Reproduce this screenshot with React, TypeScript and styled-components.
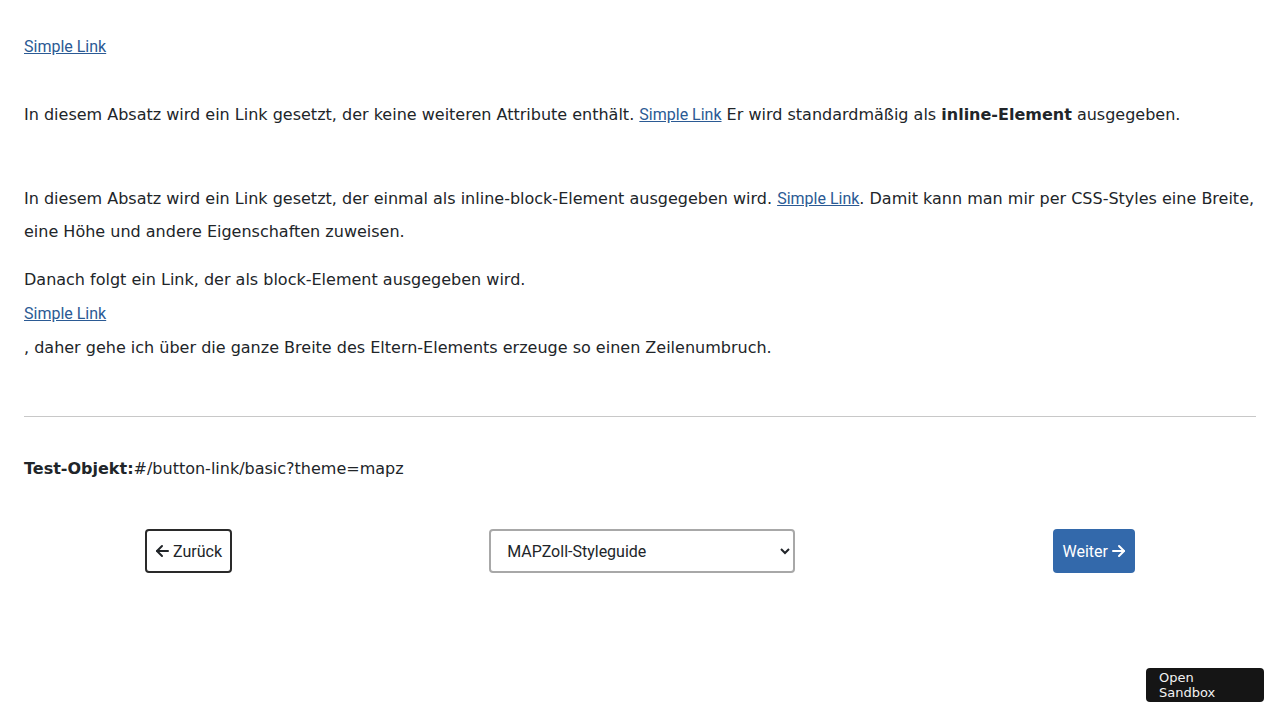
import styled, { createGlobalStyle } from "styled-components";

const GlobalStyle = createGlobalStyle`
  html, body {
    margin: 0;
    padding: 0;
    background: #ffffff;
  }
  body {
    font-family: "DejaVu Sans", Verdana, sans-serif;
    font-size: 16px;
    color: #212529;
  }
`;

const Page = styled.main`
  padding: 24px 24px 0;
`;

const Link = styled.a<{ block?: boolean }>`
  font-family: Roboto, "Liberation Sans", sans-serif;
  font-size: 16px;
  color: #2b5a94;
  text-decoration: underline;
  display: ${({ block }) => (block ? "block" : "inline")};
  line-height: ${({ block }) => (block ? "35px" : "inherit")};
`;

const LinkBlock = styled.div`
  height: 44px;
  display: flex;
  align-items: center;
`;

const Paragraph = styled.p`
  margin: 0;
  line-height: 33px;
`;

const Section = styled.section`
  display: flex;
  flex-direction: column;
`;

const Gap = styled.div<{ size: number }>`
  height: ${({ size }) => size}px;
`;

const Rule = styled.hr`
  border: 0;
  border-top: 1px solid #c8c8c8;
  margin: 0;
`;

const TestLine = styled.p`
  margin: 0;
  line-height: 22px;
`;

const Nav = styled.nav`
  display: flex;
  justify-content: space-between;
  align-items: center;
  padding: 0 121px;
`;

const NavButton = styled.button<{ primary?: boolean }>`
  height: 44px;
  padding: ${({ primary }) => (primary ? "0 9px 0 10px" : "0 8px")};
  border: ${({ primary }) => (primary ? "0" : "2px solid #2a2a2a")};
  border-radius: 4px;
  background: ${({ primary }) => (primary ? "#3369ab" : "#fff")};
  color: ${({ primary }) => (primary ? "#fff" : "#212529")};
  font-family: Roboto, "Liberation Sans", sans-serif;
  font-size: 16px;
  display: flex;
  align-items: center;
  gap: 4px;
`;

const Select = styled.select`
  width: 306px;
  height: 44px;
  padding: 0 12px 0 12px;
  border: 2px solid #a8a8a8;
  border-radius: 4px;
  background: #fff;
  color: #212529;
  font-family: Roboto, "Liberation Sans", sans-serif;
  font-size: 16px;
`;

const SandboxButton = styled.button`
  position: fixed;
  right: 16px;
  bottom: 18px;
  width: 118px;
  height: 34px;
  padding: 0 13px;
  border: 0;
  border-radius: 4px;
  background: #151515;
  color: #f2f2f2;
  font-family: "DejaVu Sans", sans-serif;
  font-size: 13px;
  line-height: 15px;
  text-align: left;
`;

const Arrow = ({ dir }: { dir: "left" | "right" }) => (
  <svg width="14" height="14" viewBox="0 0 14 14" fill="none" stroke="currentColor" strokeWidth="2" strokeLinecap="round" strokeLinejoin="round">
    {dir === "left" ? (
      <>
        <path d="M13 7H2" />
        <path d="M7 2L2 7l5 5" />
      </>
    ) : (
      <>
        <path d="M1 7h11" />
        <path d="M7 2l5 5-5 5" />
      </>
    )}
  </svg>
);

export default function App() {
  return (
    <>
      <GlobalStyle />
      <Page>
        <LinkBlock>
          <Link href="#">Simple Link</Link>
        </LinkBlock>
        <Gap size={30} />
        <Paragraph>
          In diesem Absatz wird ein Link gesetzt, der keine weiteren Attribute enthält.{" "}
          <Link href="#">Simple Link</Link> Er wird standardmäßig als <strong>inline-Element</strong>{" "}
          ausgegeben.
        </Paragraph>
        <Gap size={51} />
        <Section>
          <Paragraph>
            In diesem Absatz wird ein Link gesetzt, der einmal als inline-block-Element ausgegeben wird.{" "}
            <Link href="#">Simple Link</Link>. Damit kann man mir per CSS-Styles eine Breite, eine Höhe und
            andere Eigenschaften zuweisen.
          </Paragraph>
          <Gap size={15} />
          <Paragraph>Danach folgt ein Link, der als block-Element ausgegeben wird.</Paragraph>
          <Link href="#" block>
            Simple Link
          </Link>
          <Paragraph>
            , daher gehe ich über die ganze Breite des Eltern-Elements erzeuge so einen Zeilenumbruch.
          </Paragraph>
        </Section>
        <Gap size={52} />
        <Rule />
        <Gap size={41} />
        <TestLine>
          <strong>Test-Objekt:</strong>#/button-link/basic?theme=mapz
        </TestLine>
        <Gap size={49} />
        <Nav>
          <NavButton>
            <Arrow dir="left" />
            Zurück
          </NavButton>
          <Select defaultValue="mapz">
            <option value="mapz">MAPZoll-Styleguide</option>
          </Select>
          <NavButton primary>
            Weiter
            <Arrow dir="right" />
          </NavButton>
        </Nav>
      </Page>
      <SandboxButton>
        Open
        <br />
        Sandbox
      </SandboxButton>
    </>
  );
}
